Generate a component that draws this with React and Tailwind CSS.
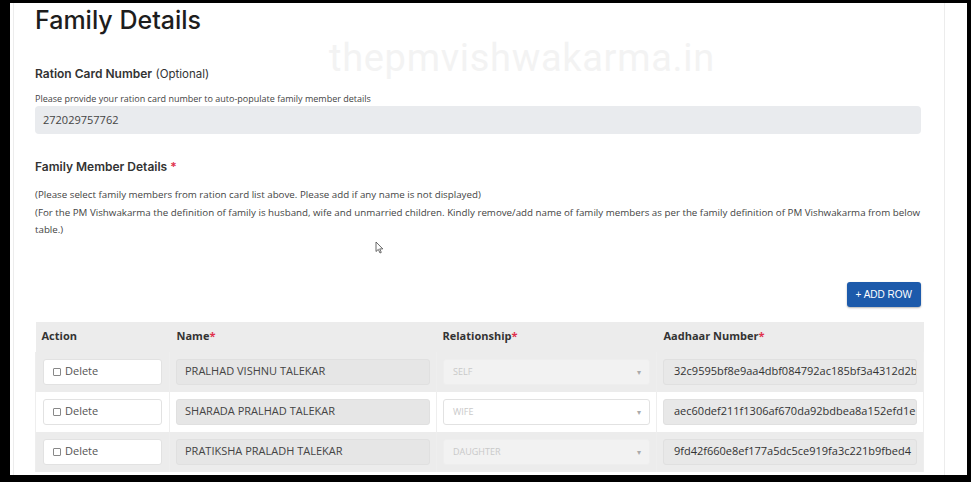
import React from 'react';

const body = { fontFamily: '"Open Sans", "Liberation Sans", sans-serif' };
const head = { fontFamily: 'Inter, "Noto Sans", sans-serif' };

const members = [
  { name: 'PRALHAD VISHNU TALEKAR', rel: 'SELF', aadhaar: '32c9595bf8e9aa4dbf084792ac185bf3a4312d2b', striped: true },
  { name: 'SHARADA PRALHAD TALEKAR', rel: 'WIFE', aadhaar: 'aec60def211f1306af670da92bdbea8a152efd1e', striped: false },
  { name: 'PRATIKSHA PRALADH TALEKAR', rel: 'DAUGHTER', aadhaar: '9fd42f660e8ef177a5dc5ce919fa3c221b9fbed4', striped: true },
];

function Req() {
  return <span className="text-[#e0314b]">*</span>;
}

function MemberRow({ m }) {
  const bg = m.striped ? 'bg-[#ececec]' : 'bg-white';
  return (
    <tr className={`${bg} h-[40px]`}>
      <td className="px-[7px] border-x border-[#eeeeee]">
        <div className="h-[26px] bg-white border border-[#e2e2e2] rounded-[3px] flex items-center pl-[9px] gap-[4px] text-[11px] text-[#555]">
          <span className="w-[8px] h-[8px] border border-[#888] rounded-[1px]" />
          <span>Delete</span>
        </div>
      </td>
      <td className="px-[6px] border-x border-[#eeeeee]">
        <div className="h-[26px] bg-[#e6e6e6] border border-[#e0e0e0] rounded-[3px] flex items-center pl-[8px] text-[11px] text-[#444] whitespace-nowrap overflow-hidden">
          {m.name}
        </div>
      </td>
      <td className="px-[6px] border-x border-[#eeeeee]">
        <div
          className={`h-[26px] ${m.striped ? 'bg-[#f2f2f2] border-[#eeeeee]' : 'bg-white border-[#e2e2e2]'} border rounded-[3px] flex items-center justify-between pl-[9px] pr-[8px] text-[9px] text-[#c9c9c9]`}
        >
          <span>{m.rel}</span>
          <span className="text-[8px] text-[#aaa]">▾</span>
        </div>
      </td>
      <td className="px-[6px] border-x border-[#eeeeee]">
        <div className="h-[26px] bg-[#e8e8e8] border border-[#e0e0e0] rounded-[3px] flex items-center pl-[10px] text-[11px] text-[#333] whitespace-nowrap overflow-hidden">
          {m.aadhaar}
        </div>
      </td>
    </tr>
  );
}

export default function App() {
  return (
    <div className="w-[971px] h-[482px] bg-black pt-[3px] pl-[10px] pr-[4px] pb-[7px] overflow-hidden" style={body}>
      <div className="relative h-full bg-white pl-[3px] flex">
        {/* watermark */}
        <div
          className="absolute left-[319px] top-[27px] text-[38px] text-[#f3f3f3] tracking-[0.7px] pointer-events-none select-none"
          style={{ fontFamily: 'Roboto, sans-serif' }}
        >
          thepmvishwakarma.in
        </div>

        <div className="relative w-[932px] h-full border-x border-[#ececec] pl-[21px] pr-[23px] overflow-hidden">
          <h1 className="text-[25px] leading-[30px] font-medium text-[#1d1d1d] mt-[2px]" style={head}>
            Family Details
          </h1>

          <div className="mt-[31px] text-[12px] leading-[16px] text-[#333]" style={head}>
            <span className="font-semibold">Ration Card Number</span> <span className="text-[11.5px]">(Optional)</span>
          </div>

          <p className="mt-[11px] text-[9px] text-[#444] leading-[12px]">
            Please provide your ration card number to auto-populate family member details
          </p>
          <div className="mt-[1px] h-[28px] bg-[#e9ebee] rounded-[4px] flex items-center pl-[8px] text-[11px] text-[#444]">
            272029757762
          </div>

          <div className="mt-[25px] text-[12px] leading-[16px] font-semibold text-[#333]" style={head}>
            Family Member Details <Req />
          </div>

          <div className="mt-[11px] text-[9.75px] leading-[17.5px] text-[#444]">
            <p>(Please select family members from ration card list above. Please add if any name is not displayed)</p>
            <p>
              (For the PM Vishwakarma the definition of family is husband, wife and unmarried children. Kindly
              remove/add name of family members as per the family definition of PM Vishwakarma from below table.)
            </p>
          </div>

          {/* mouse cursor */}
          <svg className="absolute left-[361px] top-[238px]" width="9" height="13" viewBox="0 0 9 13">
            <path d="M1 1 L1 10.5 L3.3 8.4 L5 12 L6.3 11.4 L4.7 7.9 L7.8 7.9 Z" fill="white" stroke="#444" strokeWidth="0.8" />
          </svg>

          <div className="flex justify-end mt-[43px]">
            <button
              className="h-[25px] px-[9px] bg-[#1c5aab] rounded-[3px] text-white text-[10px] shadow-[0_1px_2px_rgba(0,0,0,0.3)]"
              style={{ fontFamily: '"Liberation Sans", Arial, sans-serif' }}
            >
              + ADD ROW
            </button>
          </div>

          <table className="mt-[15px] w-full border-collapse table-fixed">
            <colgroup>
              <col className="w-[134px]" />
              <col className="w-[267px]" />
              <col className="w-[220px]" />
              <col className="w-[267px]" />
            </colgroup>
            <thead>
              <tr className="bg-[#ececec] h-[30px] text-left text-[11px] font-bold text-[#333]">
                <th className="px-[6px] font-bold">Action</th>
                <th className="px-[7px] font-bold">Name<Req /></th>
                <th className="px-[6px] font-bold">Relationship<Req /></th>
                <th className="px-[7px] font-bold">Aadhaar Number<Req /></th>
              </tr>
            </thead>
            <tbody>
              {members.map((m) => (
                <MemberRow key={m.name} m={m} />
              ))}
            </tbody>
          </table>
        </div>
      </div>
    </div>
  );
}
